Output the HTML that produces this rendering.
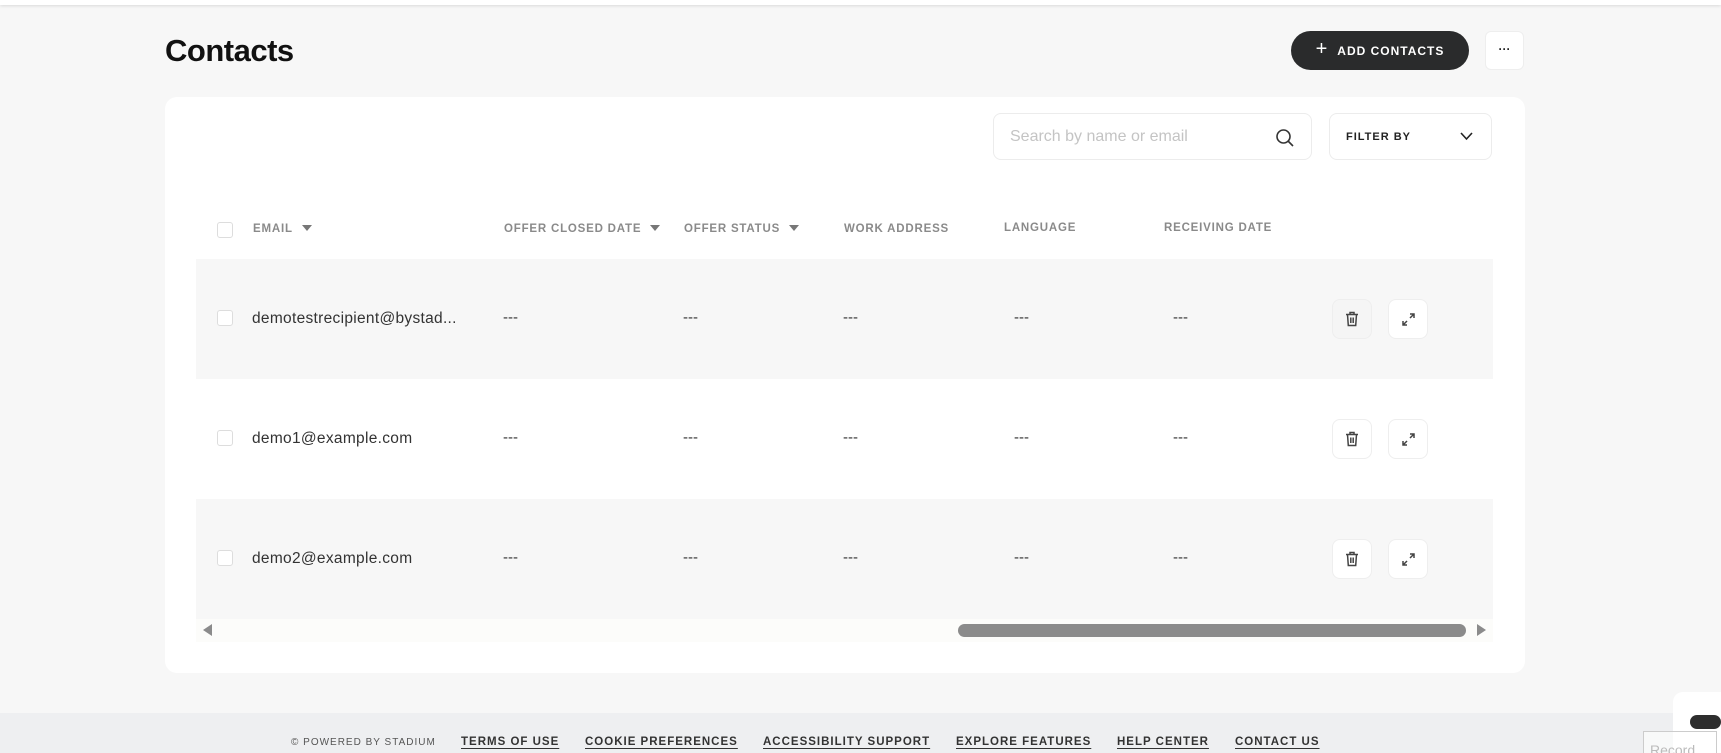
<!DOCTYPE html>
<html><head><meta charset="utf-8"><style>
*{box-sizing:border-box;margin:0;padding:0}
body{width:1721px;height:753px;overflow:hidden;background:#f7f7f7;font-family:"Liberation Sans",sans-serif;position:relative;color:#222}
.abs{position:absolute}
.topbar{left:0;top:0;width:1721px;height:5px;background:#fff;box-shadow:0 1px 3px rgba(0,0,0,.12)}
h1{position:absolute;left:165px;top:33px;font-size:31px;font-weight:bold;color:#111;letter-spacing:-.5px}
.add{left:1291px;top:31px;width:178px;height:39px;border-radius:20px;background:#2a2b2c;color:#fff;font-size:12px;font-weight:bold;letter-spacing:1px;display:flex;align-items:center;justify-content:center;gap:10px}
.add span.p{font-size:20px;font-weight:normal;letter-spacing:0;margin-top:-2px}
.more{left:1485px;top:31px;width:39px;height:39px;background:#fff;border:1px solid #eee;border-radius:6px;text-align:center;font-size:12px;font-weight:bold;line-height:34px}
.card{left:165px;top:97px;width:1360px;height:576px;background:#fff;border-radius:12px}
.search{left:993px;top:113px;width:319px;height:47px;border:1px solid #ececec;border-radius:8px;background:#fff;font-size:16px;color:#c4c4c4;padding:14px 16px}
.filter{left:1329px;top:113px;width:163px;height:47px;border:1px solid #ececec;border-radius:8px;background:#fff;font-size:11px;font-weight:bold;letter-spacing:1px;padding:17px 16px;color:#222}
.hd{top:223px;font-size:11.5px;font-weight:bold;color:#8a8a8a;letter-spacing:.8px}
.tri{display:inline-block;width:0;height:0;border-left:5px solid transparent;border-right:5px solid transparent;border-top:6px solid #777;margin-left:9px;vertical-align:1px}
.cb{width:16px;height:16px;border:1px solid #ddd;border-radius:3px;background:#fff;left:217px}
.row{left:196px;width:1297px;height:120px}
.cell{font-size:15px;color:#333}
.em{font-size:15.5px;letter-spacing:.3px}
.btn{width:40px;height:40px;border:1px solid #eee;border-radius:8px;background:#fff;display:flex;align-items:center;justify-content:center}
.foot{left:0;top:713px;width:1721px;height:40px;background:#eeeff1}
.fl{top:736px;font-size:11.5px;font-weight:bold;letter-spacing:1px;color:#333;text-decoration:underline;text-underline-offset:3px}
</style></head><body>
<div class="abs topbar"></div>
<h1>Contacts</h1>
<div class="abs add"><span class="p">+</span>ADD CONTACTS</div>
<div class="abs more">···</div>
<div class="abs card"></div>
<div class="abs search">Search by name or email
<svg class="abs" style="left:281px;top:14px" width="20" height="20" viewBox="0 0 20 20"><circle cx="8.5" cy="8.5" r="6.5" fill="none" stroke="#333" stroke-width="1.6"/><path d="M13 13l5 5" stroke="#333" stroke-width="1.6"/></svg></div>
<div class="abs filter">FILTER BY
<svg class="abs" style="left:130px;top:18px" width="13" height="9" viewBox="0 0 13 9"><path d="M1 1l5.5 6L12 1" fill="none" stroke="#222" stroke-width="1.6"/></svg></div>

<div class="abs cb" style="top:222px"></div>
<div class="abs hd" style="left:253px">EMAIL<span class="tri"></span></div>
<div class="abs hd" style="left:504px">OFFER CLOSED DATE<span class="tri"></span></div>
<div class="abs hd" style="left:684px">OFFER STATUS<span class="tri"></span></div>
<div class="abs hd" style="left:844px">WORK ADDRESS</div>
<div class="abs hd" style="left:1004px;top:222px">LANGUAGE</div>
<div class="abs hd" style="left:1164px;top:222px">RECEIVING DATE</div>

<div class="abs row" style="top:259px;background:#f7f7f7"></div>
<div class="abs row" style="top:379px;background:#fff"></div>
<div class="abs row" style="top:499px;background:#f7f7f7"></div>

<div class="abs cb" style="top:310px"></div>
<div class="abs cell em" style="left:252px;top:310px">demotestrecipient@bystad...</div>
<div class="abs cb" style="top:430px"></div>
<div class="abs cell em" style="left:252px;top:430px">demo1@example.com</div>
<div class="abs cb" style="top:550px"></div>
<div class="abs cell em" style="left:252px;top:550px">demo2@example.com</div>

<div class="abs cell" style="left:503px;top:309px">---</div><div class="abs cell" style="left:683px;top:309px">---</div><div class="abs cell" style="left:843px;top:309px">---</div><div class="abs cell" style="left:1014px;top:309px">---</div><div class="abs cell" style="left:1173px;top:309px">---</div>
<div class="abs cell" style="left:503px;top:429px">---</div><div class="abs cell" style="left:683px;top:429px">---</div><div class="abs cell" style="left:843px;top:429px">---</div><div class="abs cell" style="left:1014px;top:429px">---</div><div class="abs cell" style="left:1173px;top:429px">---</div>
<div class="abs cell" style="left:503px;top:549px">---</div><div class="abs cell" style="left:683px;top:549px">---</div><div class="abs cell" style="left:843px;top:549px">---</div><div class="abs cell" style="left:1014px;top:549px">---</div><div class="abs cell" style="left:1173px;top:549px">---</div>

<div class="abs btn" style="left:1332px;top:299px;background:#f5f5f5"><svg width="14" height="16" viewBox="0 0 14 16"><path d="M1 3.5h12M5 3.5V1.5h4v2M2.5 3.5l.8 11h7.4l.8-11M5.8 6.5v5.5M8.2 6.5v5.5" fill="none" stroke="#444" stroke-width="1.5"/></svg></div>
<div class="abs btn" style="left:1388px;top:299px"><svg width="15" height="15" viewBox="0 0 15 15"><path d="M9 2h4v4M13 2L9 6M6 13H2V9M2 13l4-4" fill="none" stroke="#444" stroke-width="1.5"/></svg></div>
<div class="abs btn" style="left:1332px;top:419px"><svg width="14" height="16" viewBox="0 0 14 16"><path d="M1 3.5h12M5 3.5V1.5h4v2M2.5 3.5l.8 11h7.4l.8-11M5.8 6.5v5.5M8.2 6.5v5.5" fill="none" stroke="#444" stroke-width="1.5"/></svg></div>
<div class="abs btn" style="left:1388px;top:419px"><svg width="15" height="15" viewBox="0 0 15 15"><path d="M9 2h4v4M13 2L9 6M6 13H2V9M2 13l4-4" fill="none" stroke="#444" stroke-width="1.5"/></svg></div>
<div class="abs btn" style="left:1332px;top:539px"><svg width="14" height="16" viewBox="0 0 14 16"><path d="M1 3.5h12M5 3.5V1.5h4v2M2.5 3.5l.8 11h7.4l.8-11M5.8 6.5v5.5M8.2 6.5v5.5" fill="none" stroke="#444" stroke-width="1.5"/></svg></div>
<div class="abs btn" style="left:1388px;top:539px"><svg width="15" height="15" viewBox="0 0 15 15"><path d="M9 2h4v4M13 2L9 6M6 13H2V9M2 13l4-4" fill="none" stroke="#444" stroke-width="1.5"/></svg></div>

<div class="abs" style="left:196px;top:619px;width:1297px;height:23px;background:#fcfcfa"></div>
<div class="abs" style="left:958px;top:624px;width:508px;height:13px;border-radius:7px;background:#8b8b8b"></div>
<div class="abs" style="left:203px;top:624px;width:0;height:0;border-top:6px solid transparent;border-bottom:6px solid transparent;border-right:9px solid #8b8b8b"></div>
<div class="abs" style="left:1477px;top:624px;width:0;height:0;border-top:6px solid transparent;border-bottom:6px solid transparent;border-left:9px solid #8b8b8b"></div>

<div class="abs foot"></div>
<div class="abs fl" style="left:291px;top:737px;font-weight:normal;text-decoration:none;font-size:10px;color:#555">© POWERED BY STADIUM</div>
<div class="abs fl" style="left:461px">TERMS OF USE</div>
<div class="abs fl" style="left:585px">COOKIE PREFERENCES</div>
<div class="abs fl" style="left:763px">ACCESSIBILITY SUPPORT</div>
<div class="abs fl" style="left:956px">EXPLORE FEATURES</div>
<div class="abs fl" style="left:1117px">HELP CENTER</div>
<div class="abs fl" style="left:1235px">CONTACT US</div>

<div class="abs" style="left:1673px;top:692px;width:48px;height:61px;background:#fff;border-radius:10px 0 0 0"></div>
<div class="abs" style="left:1690px;top:715px;width:31px;height:14px;border-radius:7px;background:#2e2e2e"></div>
<div class="abs" style="left:1643px;top:731px;width:74px;height:22px;border:1px solid #ccc;border-bottom:none;background:rgba(255,255,255,.6);font-size:14px;color:#bbb;padding:10px 0 0 6px;overflow:hidden">Record</div>
</body></html>
